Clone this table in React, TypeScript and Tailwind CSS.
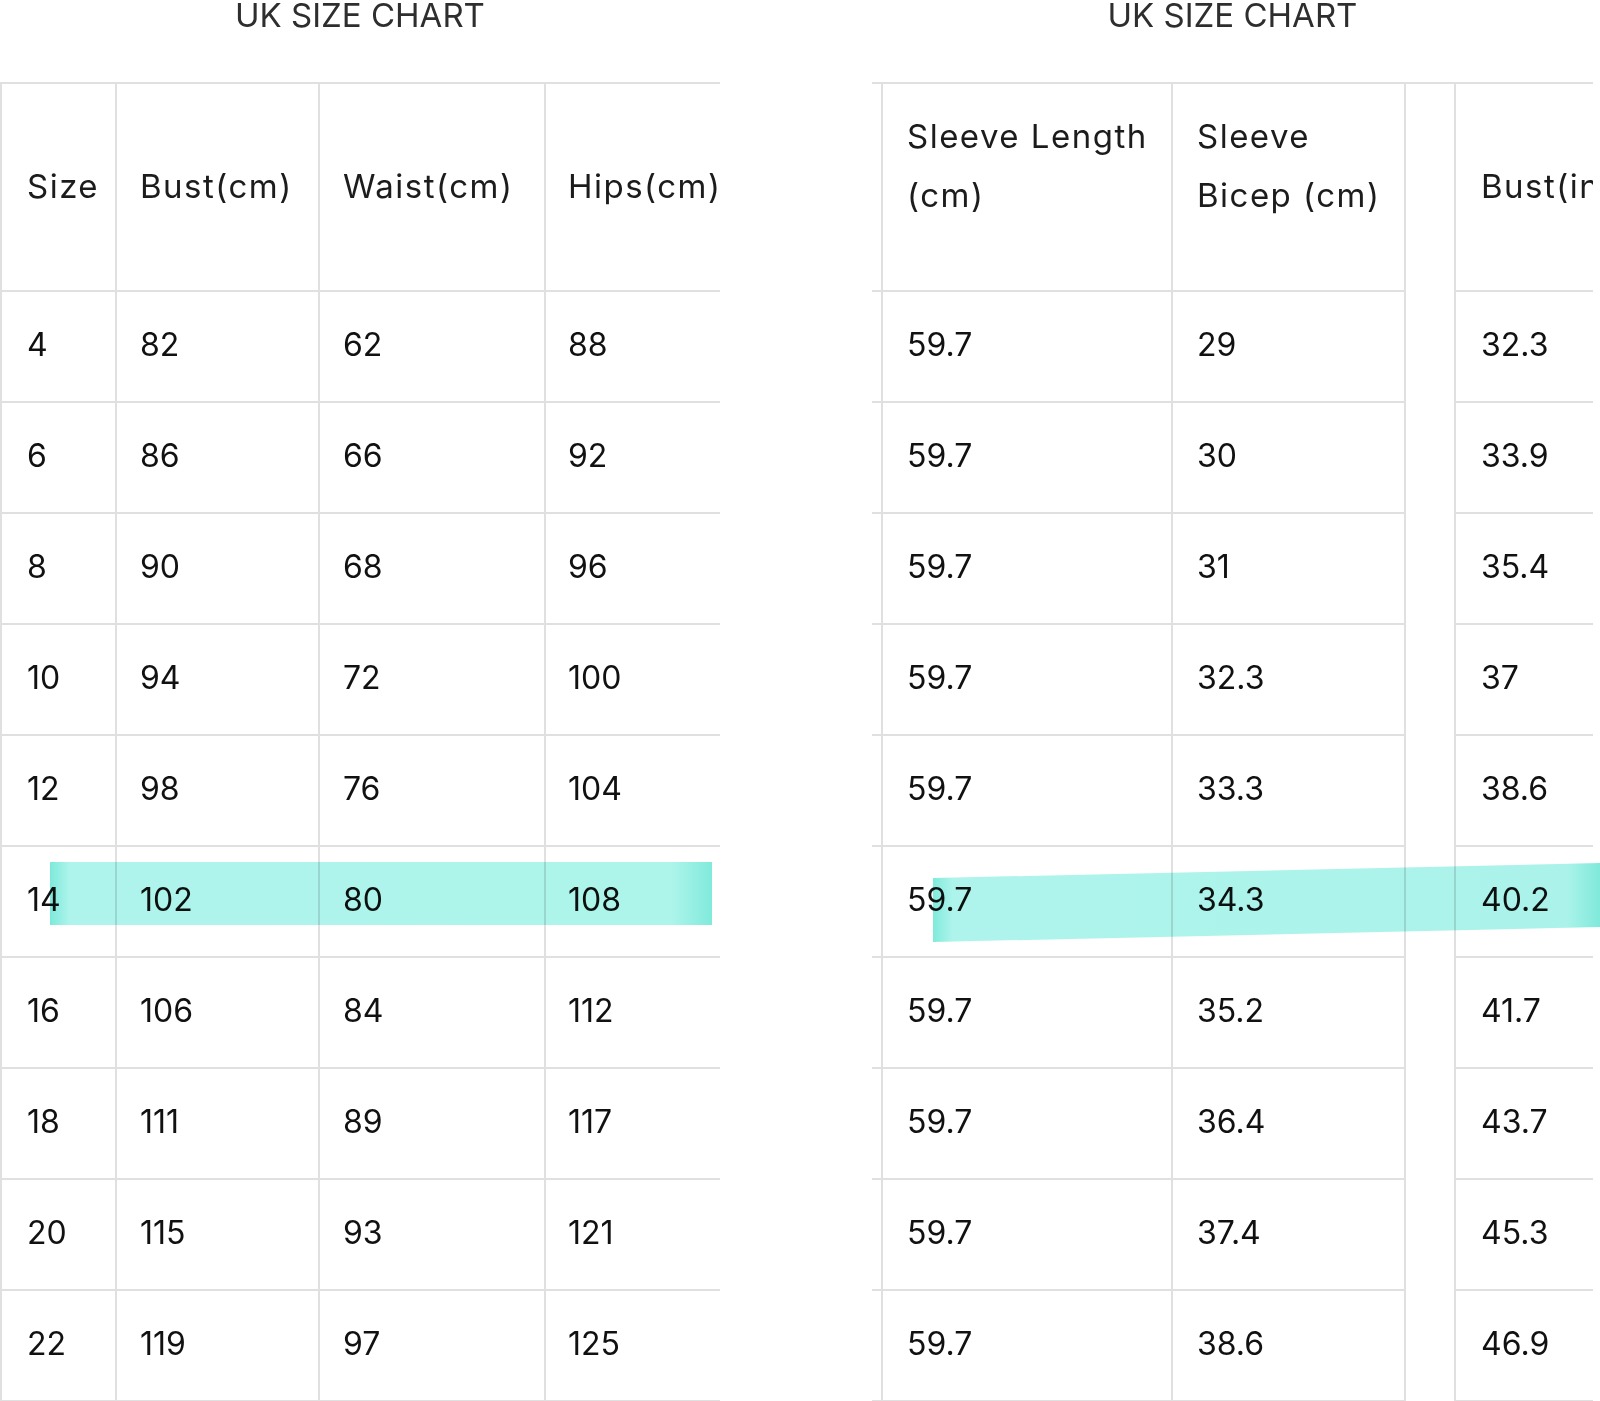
const leftRows = [
  ["4", "82", "62", "88"],
  ["6", "86", "66", "92"],
  ["8", "90", "68", "96"],
  ["10", "94", "72", "100"],
  ["12", "98", "76", "104"],
  ["14", "102", "80", "108"],
  ["16", "106", "84", "112"],
  ["18", "111", "89", "117"],
  ["20", "115", "93", "121"],
  ["22", "119", "97", "125"],
];

const rightRows = [
  ["59.7", "29", "32.3"],
  ["59.7", "30", "33.9"],
  ["59.7", "31", "35.4"],
  ["59.7", "32.3", "37"],
  ["59.7", "33.3", "38.6"],
  ["59.7", "34.3", "40.2"],
  ["59.7", "35.2", "41.7"],
  ["59.7", "36.4", "43.7"],
  ["59.7", "37.4", "45.3"],
  ["59.7", "38.6", "46.9"],
];

const head = "font-['Inter',sans-serif] text-[33px] text-[#1c1c1c] tracking-[0.045em] whitespace-nowrap";
const num = "font-['Inter',sans-serif] text-[32px] text-[#111] pb-[3px]";

function Title() {
  return (
    <div className="h-[82px] flex justify-center">
      <div className="font-['Inter',sans-serif] text-[33px] leading-[33px] mt-[-1px] text-[#2e2e2e] whitespace-nowrap">
        UK SIZE CHART
      </div>
    </div>
  );
}

function LeftTable() {
  const widths = ["w-[115px] pl-[25px]", "w-[203px] pl-[23px]", "w-[226px] pl-[23px]", "w-[176px] pl-[22px]"];
  return (
    <div className="w-[720px] shrink-0">
      <Title />
      <div className="border-t-2 border-[#e0e0e0]">
        <div className="flex h-[208px] border-b-2 border-[#e0e0e0]">
          {["Size", "Bust(cm)", "Waist(cm)", "Hips(cm)"].map((h, i) => (
            <div key={h} className={`${widths[i]} flex items-center border-l-2 border-[#e0e0e0] ${head}`}>
              {h}
            </div>
          ))}
        </div>
        {leftRows.map((r) => (
          <div key={r[0]} className="flex h-[111px] border-b-2 border-[#e0e0e0]">
            {r.map((v, i) => (
              <div key={i} className={`${widths[i]} flex items-center border-l-2 border-[#e0e0e0] ${num}`}>
                {v}
              </div>
            ))}
          </div>
        ))}
      </div>
    </div>
  );
}

function RightTable() {
  return (
    <div className="w-[721px] shrink-0 overflow-hidden">
      <Title />
      <div className="border-t-2 border-[#e0e0e0]">
        <div className="flex h-[208px]">
          <div className="w-[9px] border-b-2 border-[#e0e0e0]" />
          <div className={`w-[290px] pl-[24px] pt-[23px] leading-[59px] border-l-2 border-b-2 border-[#e0e0e0] ${head}`}>
            Sleeve Length
            <br />
            (cm)
          </div>
          <div className={`w-[233px] pl-[24px] pt-[23px] leading-[59px] border-l-2 border-b-2 border-[#e0e0e0] ${head}`}>
            Sleeve
            <br />
            Bicep (cm)
          </div>
          <div className="w-[50px] border-l-2 border-[#e0e0e0]" />
          <div className={`w-[139px] pl-[25px] flex items-center border-l-2 border-b-2 border-[#e0e0e0] ${head}`}>
            Bust(inch)
          </div>
        </div>
        {rightRows.map((r, k) => (
          <div key={k} className="flex h-[111px]">
            <div className="w-[9px] border-b-2 border-[#e0e0e0]" />
            <div className={`w-[290px] pl-[24px] flex items-center border-l-2 border-b-2 border-[#e0e0e0] ${num}`}>{r[0]}</div>
            <div className={`w-[233px] pl-[24px] flex items-center border-l-2 border-b-2 border-[#e0e0e0] ${num}`}>{r[1]}</div>
            <div className="w-[50px] border-l-2 border-[#e0e0e0]" />
            <div className={`w-[139px] pl-[25px] flex items-center border-l-2 border-b-2 border-[#e0e0e0] ${num}`}>{r[2]}</div>
          </div>
        ))}
      </div>
    </div>
  );
}

export default function App() {
  return (
    <div className="relative w-[1600px] h-[1401px] overflow-hidden bg-white">
      <div className="flex gap-[152px]">
        <LeftTable />
        <RightTable />
      </div>

      {/* highlighter marks over the size 14 row */}
      <div className="absolute left-[50px] top-[862px] w-[662px] h-[63px] mix-blend-multiply pointer-events-none bg-[linear-gradient(90deg,#7de9da_0%,#aef4ec_3%,#adf4eb_94%,#80eadb_100%)]" />
      <svg className="absolute left-[933px] top-[862px] mix-blend-multiply pointer-events-none" width="667" height="81" viewBox="0 0 667 81">
        <defs>
          <linearGradient id="hl" x1="0" x2="1" y1="0" y2="0">
            <stop offset="0" stopColor="#80eadb" />
            <stop offset="0.03" stopColor="#aef4ec" />
            <stop offset="0.95" stopColor="#abf3ea" />
            <stop offset="1" stopColor="#7fe9da" />
          </linearGradient>
        </defs>
        <polygon points="0,16 667,1 667,65 0,80" fill="url(#hl)" />
      </svg>
    </div>
  );
}
